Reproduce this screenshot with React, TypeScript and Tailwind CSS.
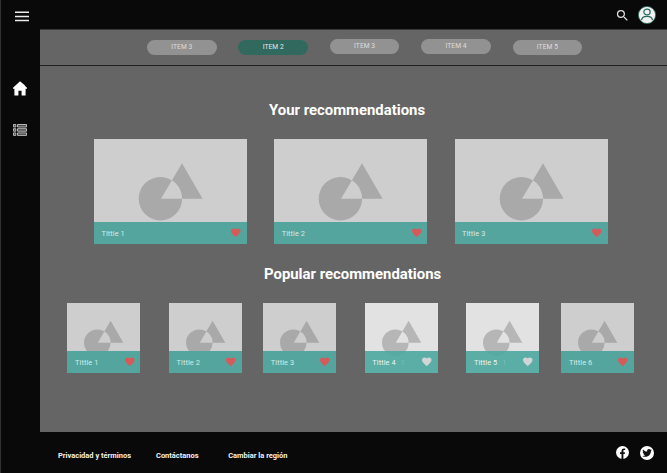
import { MdFavorite, MdSearch } from "react-icons/md";

const items = [
  { label: "ITEM 3", style: "bg-[#929292] text-[#dddddd] mt-[0.7px]" },
  { label: "ITEM 2", style: "bg-[#31695e] text-[#e6e6e6] mt-[0.7px]" },
  { label: "ITEM 3", style: "bg-[#929292] text-[#dddddd] mt-[-0.3px]" },
  { label: "ITEM 4", style: "bg-[#929292] text-[#dddddd] mt-[-0.3px]" },
  { label: "ITEM 5", style: "bg-[#929292] text-[#dddddd] mt-[0.7px]" },
];

const popular = [
  { title: "Tittle 1", light: false, ghost: "", gap: "" },
  { title: "Tittle 2", light: false, ghost: "", gap: "ml-[28.5px]" },
  { title: "Tittle 3", light: false, ghost: "", gap: "ml-[21.2px]" },
  { title: "Tittle 4", light: true, ghost: ": 1", gap: "ml-[28.5px]" },
  { title: "Tittle 5", light: true, ghost: ": 1", gap: "ml-[28.7px]" },
  { title: "Tittle 6", light: false, ghost: "", gap: "ml-[22px]" },
];

function LargeCard({ title }: { title: string }) {
  return (
    <article className="flex h-[105px] w-[153px] flex-col bg-[#cecece]">
      <svg viewBox="0 0 153 83" className="h-[83px] w-[153px]">
        <path
          fill="#a9a9a9"
          fillRule="evenodd"
          d="M44.7 59.7a21.7 21.7 0 1 0 43.4 0a21.7 21.7 0 1 0-43.4 0ZM88 24.3 67 59.7h41.6Z"
        />
      </svg>
      <div className="flex h-[22px] items-center justify-between bg-[#54a59d] pr-[5.2px] pl-[7.4px]">
        <span className="mt-[1px] text-[7.4px] leading-none tracking-[0.08px] text-[#d6e9e6]">{title}</span>
        <MdFavorite className="size-[11.5px] text-[#d55b5b]" />
      </div>
    </article>
  );
}

function SmallCard({ title, light, ghost, gap }: (typeof popular)[number]) {
  return (
    <article className={`flex h-[70.5px] w-[73px] shrink-0 flex-col ${light ? "bg-[#e2e2e2]" : "bg-[#cecece]"} ${gap}`}>
      <svg viewBox="0 0 73 48.5" className={`w-[73px] h-[48.5px] ${light ? "overflow-visible" : "overflow-hidden"}`}>
        <path
          fill={light ? "#b6b6b6" : "#a9a9a9"}
          fillRule="evenodd"
          d="M17 39.7a13.3 13.3 0 1 0 26.6 0a13.3 13.3 0 1 0-26.6 0ZM43.6 17.8 30.8 39.7h25.5Z"
        />
      </svg>
      <div
        className={`z-10 flex h-[22px] items-center justify-between pr-[5.3px] pl-[7.7px] ${light ? "bg-[#4ca89ee8]" : "bg-[#54a59d]"}`}
      >
        <span className={`mt-[1px] text-[7.4px] leading-none tracking-[0.08px] whitespace-pre ${light ? "text-[#e9f4f2]" : "text-[#d6e9e6]"}`}>
          {title}
          {ghost && <span className="ml-[1px] text-[#82bdb6]">{ghost}</span>}
        </span>
        <MdFavorite className={`size-[11.5px] ${light ? "text-[#d2d5d5]" : "text-[#d55b5b]"}`} />
      </div>
    </article>
  );
}

export default function App() {
  return (
    <div className="flex h-[473px] w-[667px] flex-col overflow-hidden border-l border-[#303030] bg-[#090909] font-['Roboto',sans-serif]">
      <header className="flex h-[29px] shrink-0 items-center justify-between pr-[11px] pl-[14px]">
        <svg viewBox="0 0 14 11" className="mt-[4px] h-[11px] w-[14px]">
          <path d="M0 1.3h14M0 5.4h14M0 9.5h14" stroke="#ececec" strokeWidth="1.5" />
        </svg>
        <div className="flex items-center gap-[8px]">
          <MdSearch className="mt-[1px] size-[15px] text-[#dddddd]" />
          <svg viewBox="0 0 18 18" className="size-[18px]" fill="none" stroke="#256b5e" strokeWidth="1.2">
            <circle cx="9" cy="9" r="8.6" fill="#f1f1f1" strokeWidth="0.8" />
            <ellipse cx="9" cy="6" rx="3.2" ry="2.8" />
            <path d="M3.5 14.2C4 9 14 9 14.5 14.2" />
          </svg>
        </div>
      </header>
      <div className="flex h-[402.6px] shrink-0">
        <aside className="flex w-[38.5px] shrink-0 flex-col items-center pt-[52px]">
          <svg viewBox="0 0 14 15" className="mr-[0.5px] h-[15px] w-[14px]" fill="#fff">
            <path d="M7 .2 0 6.8v.9h1.4v6.8h4V9.8h3.2v4.7h4V7.7H14v-.9L11.8 4.7V4.2z" />
          </svg>
          <svg viewBox="0 0 14 12" className="mt-[28px] h-[12px] w-[14px]" fill="#4a4a4a" stroke="#b8b8b8" strokeWidth="1">
            <path d="M.5.5h2.3v2.5H.5zM4.5.5h9v2.5h-9zM.5 4.7h2.3v2.5H.5zM4.5 4.7h9v2.5h-9zM.5 8.9h2.3v2.5H.5zM4.5 8.9h9v2.5h-9z" />
          </svg>
        </aside>
        <main className="flex min-w-0 flex-1 flex-col border-t border-[#383838] bg-[#656565]">
          <nav className="flex h-[36px] shrink-0 items-start gap-[21.9px] border-b border-[#202020] pt-[9.2px] pl-[107.6px]">
            {items.map((item, index) => (
              <div
                key={index}
                className={`flex h-[15px] w-[69.5px] items-center justify-center rounded-full text-[6.7px] leading-none tracking-[0.06px] ${item.style}`}
              >
                <span className="mt-[0.5px]">{item.label}</span>
              </div>
            ))}
          </nav>
          <h1 className="mt-[35px] ml-[229.5px] h-[18px] text-[14.9px] leading-[18px] font-bold whitespace-nowrap text-white">
            Your recommendations
          </h1>
          <section className="mt-[20px] ml-[54.5px] flex gap-[27.3px]">
            <LargeCard title="Tittle 1" />
            <LargeCard title="Tittle 2" />
            <LargeCard title="Tittle 3" />
          </section>
          <h2 className="mt-[21px] ml-[224.5px] h-[18px] text-[14.9px] leading-[18px] font-bold whitespace-nowrap text-white">
            Popular recommendations
          </h2>
          <section className="mt-[19.7px] ml-[27.9px] flex">
            {popular.map((card) => (
              <SmallCard key={card.title} {...card} />
            ))}
          </section>
        </main>
      </div>
      <footer className="flex min-h-0 flex-1 items-center justify-between pr-[13px] pl-[57px] text-[7.47px] font-bold text-[#f2f2f2]">
        <div className="mt-[6.5px] flex whitespace-nowrap">
          <span className="w-[98px]">Privacidad y términos</span>
          <span className="w-[72.2px]">Contáctanos</span>
          <span>Cambiar la región</span>
        </div>
        <div className="mt-[2px] flex gap-[11.5px]">
          <svg viewBox="0 0 13 13" className="size-[13px]">
            <circle cx="6.5" cy="6.5" r="6.5" fill="#fff" />
            <path d="M5.5 13V8H4V6.2h1.5V5c0-1.7 1-2.5 2.4-2.5l1.3.1v1.5h-.8c-.7 0-1 .4-1 1v1.1H9L8.7 8H7.4v5Z" fill="#111" />
          </svg>
          <svg viewBox="0 0 14 14" className="size-[14px]">
            <circle cx="7" cy="7" r="7" fill="#fff" />
            <path
              transform="translate(2.3 2.1) scale(.4)"
              d="M24 4.6c-.9.4-1.8.7-2.8.8 1-.6 1.8-1.6 2.2-2.7-1 .6-2 1-3.1 1.2A4.9 4.9 0 0 0 11.9 8.4C7.8 8.2 4.2 6.3 1.7 3.2c-1.3 2.2-.7 5.1 1.5 6.6-.8 0-1.6-.2-2.2-.6-.1 2.3 1.6 4.4 3.9 4.9-.7.2-1.5.2-2.2.1.6 2 2.4 3.4 4.6 3.4A9.9 9.9 0 0 1 0 19.5 14 14 0 0 0 7.5 21.7c9.1 0 14.3-7.7 14-14.6 1-.7 1.8-1.6 2.5-2.5Z"
              fill="#111"
            />
          </svg>
        </div>
      </footer>
    </div>
  );
}
